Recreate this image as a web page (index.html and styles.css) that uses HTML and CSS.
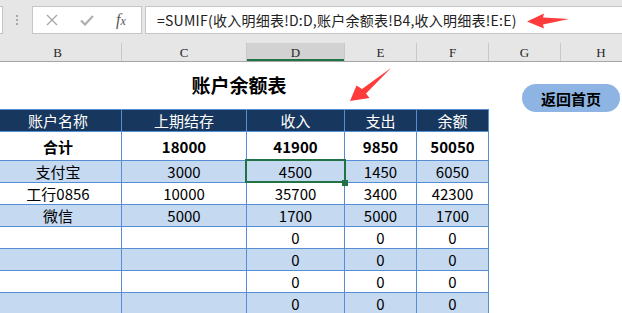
FILE: index.html
```html
<!DOCTYPE html>
<html lang="zh-CN">
<head>
<meta charset="utf-8">
<title>账户余额表</title>
<link rel="stylesheet" href="styles.css">
</head>
<body>
<div class="app">
  <div class="toolbar">
    <div class="namebox"></div>
    <div class="grip"><i></i><i></i><i></i></div>
    <div class="fxbox">
      <svg class="ico-x" width="12" height="12" viewBox="0 0 12 12"><path d="M1 1L11 11M11 1L1 11" stroke="#a9a9a9" stroke-width="1.4" fill="none"/></svg>
      <svg class="ico-ok" width="14" height="11" viewBox="0 0 14 11"><path d="M1 5.5L5 9.5L13 1" stroke="#b0b0b0" stroke-width="2.2" fill="none"/></svg>
      <span class="fx">f<span class="fx-x">x</span></span>
    </div>
    <div class="formula">=SUMIF(收入明细表!D:D,账户余额表!B4,收入明细表!E:E)</div>
  </div>

  <div class="colheads">
    <div class="ch col-b">B</div>
    <div class="ch col-c">C</div>
    <div class="ch col-d active">D</div>
    <div class="ch col-e">E</div>
    <div class="ch col-f">F</div>
    <div class="ch col-g">G</div>
    <div class="ch col-h">H</div>
  </div>

  <div class="sheet">
    <div class="title-row"><div class="title">账户余额表</div></div>
    <div class="grid">
      <div class="c h">账户名称</div><div class="c h">上期结存</div><div class="c h">收入</div><div class="c h">支出</div><div class="c h">余额</div>
      <div class="c b">合计</div><div class="c b">18000</div><div class="c b">41900</div><div class="c b">9850</div><div class="c b">50050</div>
      <div class="c alt">支付宝</div><div class="c alt">3000</div><div class="c alt">4500</div><div class="c alt">1450</div><div class="c alt">6050</div>
      <div class="c">工行0856</div><div class="c">10000</div><div class="c">35700</div><div class="c">3400</div><div class="c">42300</div>
      <div class="c alt">微信</div><div class="c alt">5000</div><div class="c alt">1700</div><div class="c alt">5000</div><div class="c alt">1700</div>
      <div class="c"></div><div class="c"></div><div class="c">0</div><div class="c">0</div><div class="c">0</div>
      <div class="c alt"></div><div class="c alt"></div><div class="c alt">0</div><div class="c alt">0</div><div class="c alt">0</div>
      <div class="c"></div><div class="c"></div><div class="c">0</div><div class="c">0</div><div class="c">0</div>
      <div class="c alt"></div><div class="c alt"></div><div class="c alt">0</div><div class="c alt">0</div><div class="c alt">0</div>
    </div>
    <div class="selection"><i class="handle"></i></div>
    <div class="btn">返回首页</div>
  </div>

  <svg class="arrows" width="622" height="313" viewBox="0 0 622 313">
    <polygon points="527,21.5 544,13.5 543,17.5 569,19 543,24.5 544,28.5" fill="#ff3b3b"/>
    <polygon points="350,101 356.5,85.5 362,89 391,68 366,93.5 369.5,98" fill="#ff3b3b"/>
  </svg>
</div>
</body>
</html>
```

FILE: styles.css
```css
html, body {
  margin: 0;
  padding: 0;
}
body {
  width: 622px;
  height: 313px;
  overflow: hidden;
  background: #ffffff;
  font-family: "Noto Sans CJK SC", "Noto Sans", sans-serif;
}
.app {
  position: relative;
  width: 622px;
  height: 313px;
  overflow: hidden;
}

/* formula bar */
.toolbar {
  height: 43px;
  box-sizing: border-box;
  padding-top: 6px;
  background: #e6e6e6;
  display: flex;
  align-items: flex-start;
}
.namebox {
  width: 3px;
  height: 28px;
  box-sizing: border-box;
  background: #ffffff;
  border: 1px solid #c6c6c6;
  border-left: 0;
}
.grip {
  display: flex;
  flex-direction: column;
  gap: 2px;
  margin: 9px 0 0 13px;
}
.grip i {
  display: block;
  width: 2px;
  height: 2px;
  background: #a8a8a8;
}
.fxbox {
  margin-left: 14px;
  width: 110px;
  height: 28px;
  box-sizing: border-box;
  background: #ffffff;
  border: 1px solid #c6c6c6;
  display: flex;
  align-items: center;
}
.ico-x { margin-left: 13px; }
.ico-ok { margin-left: 22px; }
.fx {
  margin-left: 22px;
  font-family: "Liberation Serif", serif;
  font-style: italic;
  font-size: 16px;
  color: #555555;
  line-height: 1;
}
.fx-x {
  font-size: 12px;
}
.formula {
  margin-left: 3px;
  flex: 1;
  height: 28px;
  box-sizing: border-box;
  background: #ffffff;
  border: 1px solid #c6c6c6;
  border-right: 0;
  padding-left: 11px;
  font-size: 14px;
  letter-spacing: 0.25px;
  line-height: 26px;
  color: #222222;
  white-space: nowrap;
}

/* column headers */
.colheads {
  display: flex;
  height: 19px;
  box-sizing: border-box;
  margin-left: -6px;
  background: #e6e6e6;
  border-bottom: 1px solid #a6a6a6;
}
.ch {
  flex: none;
  height: 18px;
  box-sizing: border-box;
  border-right: 1px solid #c8c8c8;
  font-family: "Liberation Serif", serif;
  font-size: 13px;
  line-height: 19px;
  text-align: center;
  color: #262626;
}
.col-b { width: 128px; }
.col-c { width: 125px; }
.col-d { width: 98px; }
.col-e { width: 72px; }
.col-f { width: 72px; }
.col-g { width: 72px; }
.col-h { width: 80px; border-right: 0; }
.ch.active {
  background: #d2d2d2;
  box-shadow: inset 0 -2px 0 #217346;
}

/* sheet */
.sheet {
  position: relative;
  height: 251px;
}
.title-row {
  height: 47px;
  width: 488px;
  margin-left: -5px;
  box-sizing: border-box;
  padding-bottom: 3px;
  display: flex;
  align-items: center;
  justify-content: center;
}
.title {
  font-size: 19px;
  font-weight: bold;
  color: #000000;
  line-height: 1;
}
.grid {
  display: grid;
  grid-template-columns: 126px 124px 97px 71px 71px;
  grid-template-rows: 21px 28px;
  grid-auto-rows: 21px;
  gap: 1px;
  width: max-content;
  margin-left: -6px;
  background: #558ed5;
  border: 1px solid #558ed5;
}
.c {
  background: #ffffff;
  display: flex;
  align-items: center;
  justify-content: center;
  font-size: 15px;
  line-height: 1;
  color: #000000;
}
.c.h {
  background: #17375e;
  color: #ffffff;
}
.c.alt {
  background: #c5d9f1;
}
.c.b {
  font-weight: bold;
}

/* active cell selection overlay */
.selection {
  position: absolute;
  left: 245px;
  top: 97px;
  width: 101px;
  height: 24px;
  box-sizing: border-box;
  border: 2px solid #217346;
}
.handle {
  position: absolute;
  left: 95px;
  top: 19px;
  width: 6px;
  height: 6px;
  background: #217346;
}

/* floating shape button */
.btn {
  position: absolute;
  left: 522px;
  top: 22px;
  width: 98px;
  height: 28px;
  border-radius: 14px;
  background: #8db4e2;
  display: flex;
  align-items: center;
  justify-content: center;
  font-size: 15px;
  font-weight: bold;
  color: #000000;
  line-height: 1;
}

/* annotation arrows */
.arrows {
  position: absolute;
  left: 0;
  top: 0;
  pointer-events: none;
}
```
